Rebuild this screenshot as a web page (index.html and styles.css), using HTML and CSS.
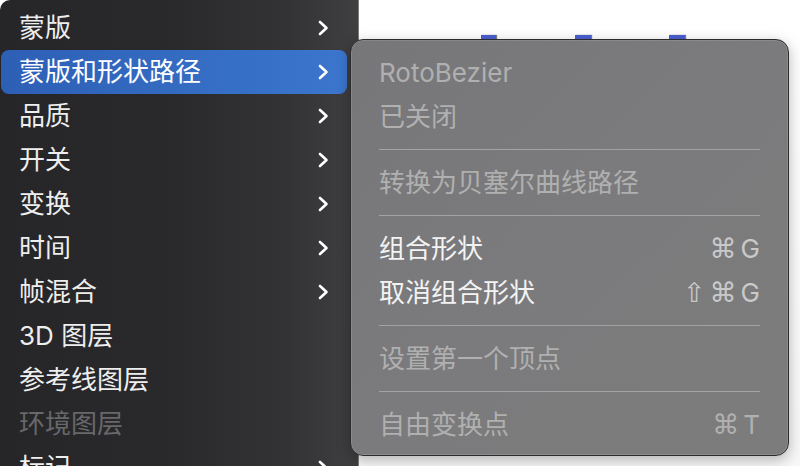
FILE: index.html
```html
<!DOCTYPE html>
<html lang="zh-CN">
<head>
<meta charset="utf-8">
<title>菜单</title>
<link rel="stylesheet" href="styles.css">
</head>
<body>
<div class="screen">
  <nav class="menu">
    <div class="item"><span>蒙版</span><svg class="chev" viewBox="0 0 12 16"><path d="M3 2 L9.5 8 L3 14"/></svg></div>
    <div class="item active"><span>蒙版和形状路径</span><svg class="chev" viewBox="0 0 12 16"><path d="M3 2 L9.5 8 L3 14"/></svg></div>
    <div class="item"><span>品质</span><svg class="chev" viewBox="0 0 12 16"><path d="M3 2 L9.5 8 L3 14"/></svg></div>
    <div class="item"><span>开关</span><svg class="chev" viewBox="0 0 12 16"><path d="M3 2 L9.5 8 L3 14"/></svg></div>
    <div class="item"><span>变换</span><svg class="chev" viewBox="0 0 12 16"><path d="M3 2 L9.5 8 L3 14"/></svg></div>
    <div class="item"><span>时间</span><svg class="chev" viewBox="0 0 12 16"><path d="M3 2 L9.5 8 L3 14"/></svg></div>
    <div class="item"><span>帧混合</span><svg class="chev" viewBox="0 0 12 16"><path d="M3 2 L9.5 8 L3 14"/></svg></div>
    <div class="item"><span>3D 图层</span></div>
    <div class="item"><span>参考线图层</span></div>
    <div class="item disabled"><span>环境图层</span></div>
    <div class="item"><span>标记</span><svg class="chev" viewBox="0 0 12 16"><path d="M3 2 L9.5 8 L3 14"/></svg></div>
  </nav>
  <main class="canvas">
    <div class="mark m1"></div>
    <div class="mark m2"></div>
    <div class="mark m3"></div>
  </main>
  <div class="submenu">
    <div class="sitem disabled">RotoBezier</div>
    <div class="sitem disabled">已关闭</div>
    <div class="sep"></div>
    <div class="sitem disabled">转换为贝塞尔曲线路径</div>
    <div class="sep"></div>
    <div class="sitem"><span>组合形状</span><span class="key"><span class="sym">⌘</span>G</span></div>
    <div class="sitem"><span>取消组合形状</span><span class="key"><span class="sym">⇧</span><span class="sym">⌘</span>G</span></div>
    <div class="sep"></div>
    <div class="sitem disabled">设置第一个顶点</div>
    <div class="sep"></div>
    <div class="sitem disabled"><span>自由变换点</span><span class="key"><span class="sym">⌘</span>T</span></div>
  </div>
</div>
</body>
</html>
```

FILE: styles.css
```css
html, body {
  margin: 0;
  padding: 0;
  background: #ffffff;
}

body {
  font-family: "Inter", "Noto Sans CJK SC", "Noto Sans", sans-serif;
  font-size: 26px;
  overflow: hidden;
}

.screen {
  position: relative;
  display: flex;
  width: 800px;
  height: 466px;
  overflow: hidden;
}

.menu {
  width: 359px;
  flex: none;
  height: 480px;
  box-sizing: border-box;
  padding-top: 6px;
  background: linear-gradient(to right, #262528 0%, #29282b 45%, #333335 80%, #3f3f41 100%);
  border-top-left-radius: 10px;
  border-bottom-left-radius: 14px;
  border-right: 1px solid #7d7d7d;
}

.item {
  display: flex;
  align-items: center;
  justify-content: space-between;
  height: 44px;
  margin: 0 11px 0 1px;
  padding: 0 18px 0 18px;
  border-radius: 8px;
  color: #eeeeee;
  line-height: 44px;
  white-space: nowrap;
}

.item.active {
  background: linear-gradient(to right, #2d5fb5, #3670c6 70%, #3b75cd);
  color: #ffffff;
}

.item.disabled {
  color: #68686a;
}

.chev {
  width: 12px;
  height: 16px;
  fill: none;
  stroke: #ffffff;
  stroke-width: 2.6;
  stroke-linecap: round;
  stroke-linejoin: round;
}

.canvas {
  position: relative;
  flex: 1;
  background: linear-gradient(to bottom, #ffffff, #f7f7f7);
}

.mark {
  position: absolute;
  top: 35px;
  width: 15px;
  height: 6px;
  background: #4b5fd3;
  box-shadow: 1px 0 1px rgba(0, 0, 0, 0.5);
}

.m1 { left: 122px; }
.m2 { left: 216px; width: 16px; }
.m3 { left: 310px; width: 16px; }

.submenu {
  position: absolute;
  left: 350px;
  top: 39px;
  width: 439px;
  height: 417px;
  box-sizing: border-box;
  padding: 11px 28px 0 28px;
  background: linear-gradient(135deg, #777779 0%, #7b7b7d 50%, #7c7c7c 100%);
  border: 1px solid #2c2c2e;
  border-radius: 13px;
  box-shadow: inset 0 0 0 1px rgba(255, 255, 255, 0.12), 0 4px 14px rgba(0, 0, 0, 0.28);
}

.sitem {
  display: flex;
  align-items: center;
  justify-content: space-between;
  height: 44px;
  line-height: 44px;
  color: #f3f3f3;
  white-space: nowrap;
}

.sitem.disabled {
  color: #b0b0b0;
}

.key {
  display: flex;
  align-items: center;
  gap: 4px;
  color: #c9c9c9;
}

.sitem.disabled .key {
  color: #b0b0b0;
}

.sym {
  font-family: "DejaVu Sans", sans-serif;
  font-size: 27px;
  line-height: 44px;
}

.sep {
  height: 1px;
  margin: 10px 0 11px;
  background: #a3a3a5;
}
```
